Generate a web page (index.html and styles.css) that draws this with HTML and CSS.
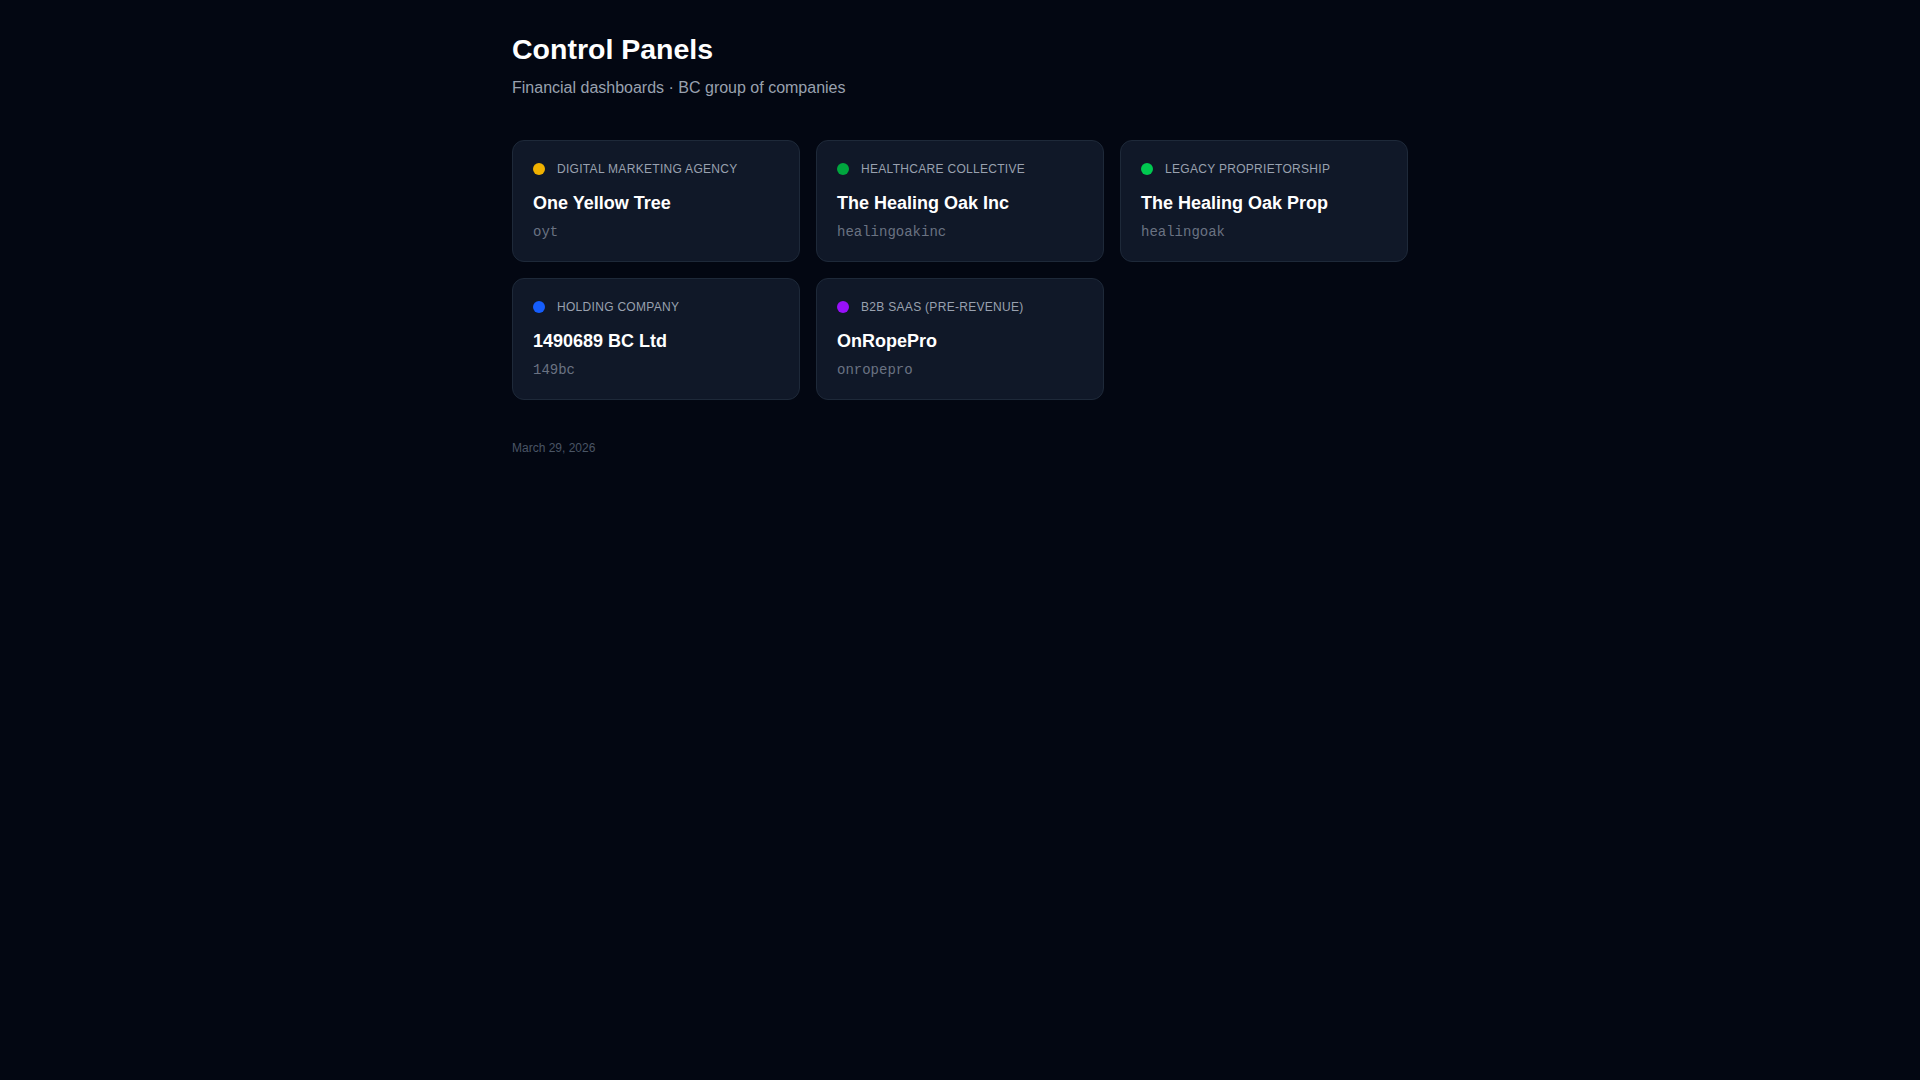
FILE: index.html
```html
<!DOCTYPE html>
<html lang="en">
<head>
<meta charset="utf-8">
<title>Control Panels</title>
<link rel="stylesheet" href="styles.css">
</head>
<body>
<main class="page">
  <header class="header">
    <h1 class="title">Control Panels</h1>
    <p class="subtitle">Financial dashboards · BC group of companies</p>
  </header>
  <section class="grid">
    <a class="card" href="#">
      <div class="kind"><span class="dot dot-yellow"></span><span class="kind-label">Digital Marketing Agency</span></div>
      <div class="name">One Yellow Tree</div>
      <div class="slug">oyt</div>
    </a>
    <a class="card" href="#">
      <div class="kind"><span class="dot dot-green"></span><span class="kind-label">Healthcare Collective</span></div>
      <div class="name">The Healing Oak Inc</div>
      <div class="slug">healingoakinc</div>
    </a>
    <a class="card" href="#">
      <div class="kind"><span class="dot dot-emerald"></span><span class="kind-label">Legacy Proprietorship</span></div>
      <div class="name">The Healing Oak Prop</div>
      <div class="slug">healingoak</div>
    </a>
    <a class="card" href="#">
      <div class="kind"><span class="dot dot-blue"></span><span class="kind-label">Holding Company</span></div>
      <div class="name">1490689 BC Ltd</div>
      <div class="slug">149bc</div>
    </a>
    <a class="card" href="#">
      <div class="kind"><span class="dot dot-purple"></span><span class="kind-label">B2B SaaS (Pre-Revenue)</span></div>
      <div class="name">OnRopePro</div>
      <div class="slug">onropepro</div>
    </a>
  </section>
  <footer class="date">March 29, 2026</footer>
</main>
</body>
</html>
```

FILE: styles.css
```css
html, body {
  margin: 0;
  padding: 0;
}
body {
  background: #030712;
  font-family: "Liberation Sans", Arial, sans-serif;
  color: #f9fafb;
  min-height: 1080px;
}
.page {
  max-width: 896px;
  margin: 0 auto;
  padding-top: 31px;
}
.header {
  margin-bottom: 40px;
}
.title {
  margin: 0;
  font-size: 28.5px;
  line-height: 36px;
  font-weight: 700;
  color: #ffffff;
}
.subtitle {
  margin: 9px 0 0;
  font-size: 16px;
  line-height: 24px;
  color: #99a1af;
}
.grid {
  display: grid;
  grid-template-columns: repeat(3, 1fr);
  gap: 16px;
}
.card {
  display: block;
  text-decoration: none;
  background: #101828;
  border: 1px solid #1e2939;
  border-radius: 12px;
  padding: 20px;
}
.kind {
  display: flex;
  align-items: center;
  gap: 12px;
  height: 16px;
}
.dot {
  width: 12px;
  height: 12px;
  border-radius: 50%;
  flex: none;
}
.dot-yellow { background: #f0b100; }
.dot-green { background: #00a63e; }
.dot-emerald { background: #00c950; }
.dot-blue { background: #155dfc; }
.dot-purple { background: #9810fa; }
.kind-label {
  font-size: 12px;
  line-height: 16px;
  text-transform: uppercase;
  letter-spacing: 0.025em;
  color: #99a1af;
}
.name {
  margin-top: 13px;
  font-size: 18px;
  line-height: 26px;
  font-weight: 700;
  color: #ffffff;
}
.slug {
  margin-top: 7px;
  font-family: "Liberation Mono", "Courier New", monospace;
  font-size: 14px;
  line-height: 18px;
  color: #6a7282;
}
.date {
  margin-top: 40px;
  font-size: 12px;
  line-height: 16px;
  color: #4a5565;
}
```
